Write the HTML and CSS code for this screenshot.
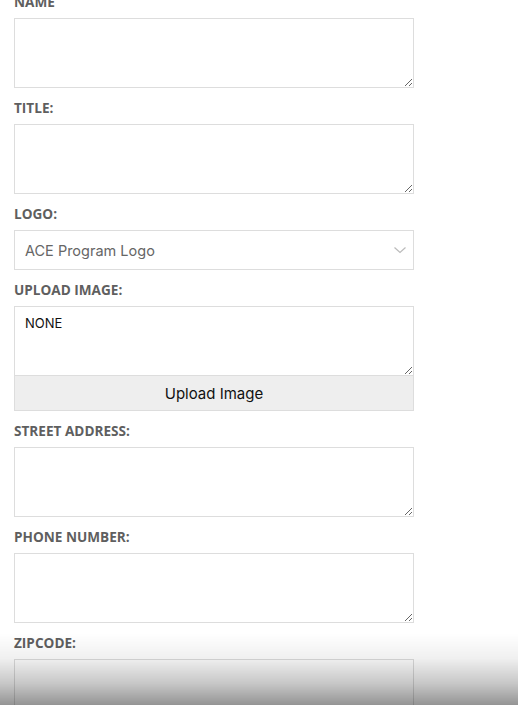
FILE: index.html
```html
<!DOCTYPE html>
<html lang="en">
<head>
<meta charset="utf-8">
<title>Form</title>
<link rel="stylesheet" href="styles.css">
</head>
<body>
<form class="form">
  <label class="label" for="name">NAME</label>
  <textarea class="field" id="name"></textarea>

  <label class="label" for="title">TITLE:</label>
  <textarea class="field" id="title"></textarea>

  <label class="label" for="logo">LOGO:</label>
  <div class="select-wrap">
    <select class="select" id="logo">
      <option>ACE Program Logo</option>
    </select>
    <svg class="chevron" width="12" height="7" viewBox="0 0 12 7"><path d="M0.5 0.5 L6 5.5 L11.5 0.5" fill="none" stroke="#bbb" stroke-width="1.2"/></svg>
  </div>

  <label class="label" for="image">UPLOAD IMAGE:</label>
  <div class="upload">
    <textarea class="field field-dark" id="image">NONE</textarea>
    <button type="button" class="upload-btn">Upload Image</button>
  </div>

  <label class="label" for="street">STREET ADDRESS:</label>
  <textarea class="field" id="street"></textarea>

  <label class="label" for="phone">PHONE NUMBER:</label>
  <textarea class="field" id="phone"></textarea>

  <label class="label" for="zip">ZIPCODE:</label>
  <textarea class="field" id="zip"></textarea>
</form>
<div class="fade"></div>
</body>
</html>
```

FILE: styles.css
```css
html, body {
  margin: 0;
  padding: 0;
  background: #fff;
  overflow: hidden;
}
body {
  height: 705px;
}
.form {
  display: flex;
  flex-direction: column;
  width: 400px;
  margin: -18px 0 0 14px;
}
.label {
  display: block;
  font-family: "Open Sans", sans-serif;
  font-weight: 700;
  font-size: 13.6px;
  line-height: 20px;
  color: #5f5f5f;
  margin: 10px 0 6px;
}
.field {
  box-sizing: border-box;
  width: 400px;
  height: 70px;
  border: 1px solid #ddd;
  border-radius: 0;
  padding: 7px 10px;
  font-family: Inter, sans-serif;
  font-size: 13px;
  line-height: 18px;
  color: #666;
  background: #fff;
  margin: 0;
  display: block;
  outline: none;
}
.field-dark {
  color: #111;
}
.select-wrap {
  position: relative;
  width: 400px;
  height: 40px;
}
.select {
  box-sizing: border-box;
  width: 400px;
  height: 40px;
  border: 1px solid #ddd;
  border-radius: 0;
  background: #fff;
  padding: 0 10px;
  font-family: Inter, sans-serif;
  font-size: 14.5px;
  color: #666;
  -webkit-appearance: none;
  appearance: none;
  outline: none;
}
.chevron {
  position: absolute;
  right: 8px;
  top: 17px;
  pointer-events: none;
}
.upload {
  display: flex;
  flex-direction: column;
}
.upload-btn {
  box-sizing: border-box;
  width: 400px;
  height: 35px;
  border: 1px solid #ddd;
  border-top: none;
  border-radius: 0;
  background: #eee;
  font-family: Inter, sans-serif;
  font-size: 15px;
  color: #111;
  padding: 0;
  margin: 0;
}
.fade {
  position: fixed;
  left: 0;
  right: 0;
  bottom: 0;
  height: 72px;
  background: linear-gradient(to bottom, rgba(0,0,0,0) 0%, rgba(0,0,0,0.06) 35%, rgba(0,0,0,0.22) 70%, rgba(0,0,0,0.42) 100%);
  pointer-events: none;
}
```
